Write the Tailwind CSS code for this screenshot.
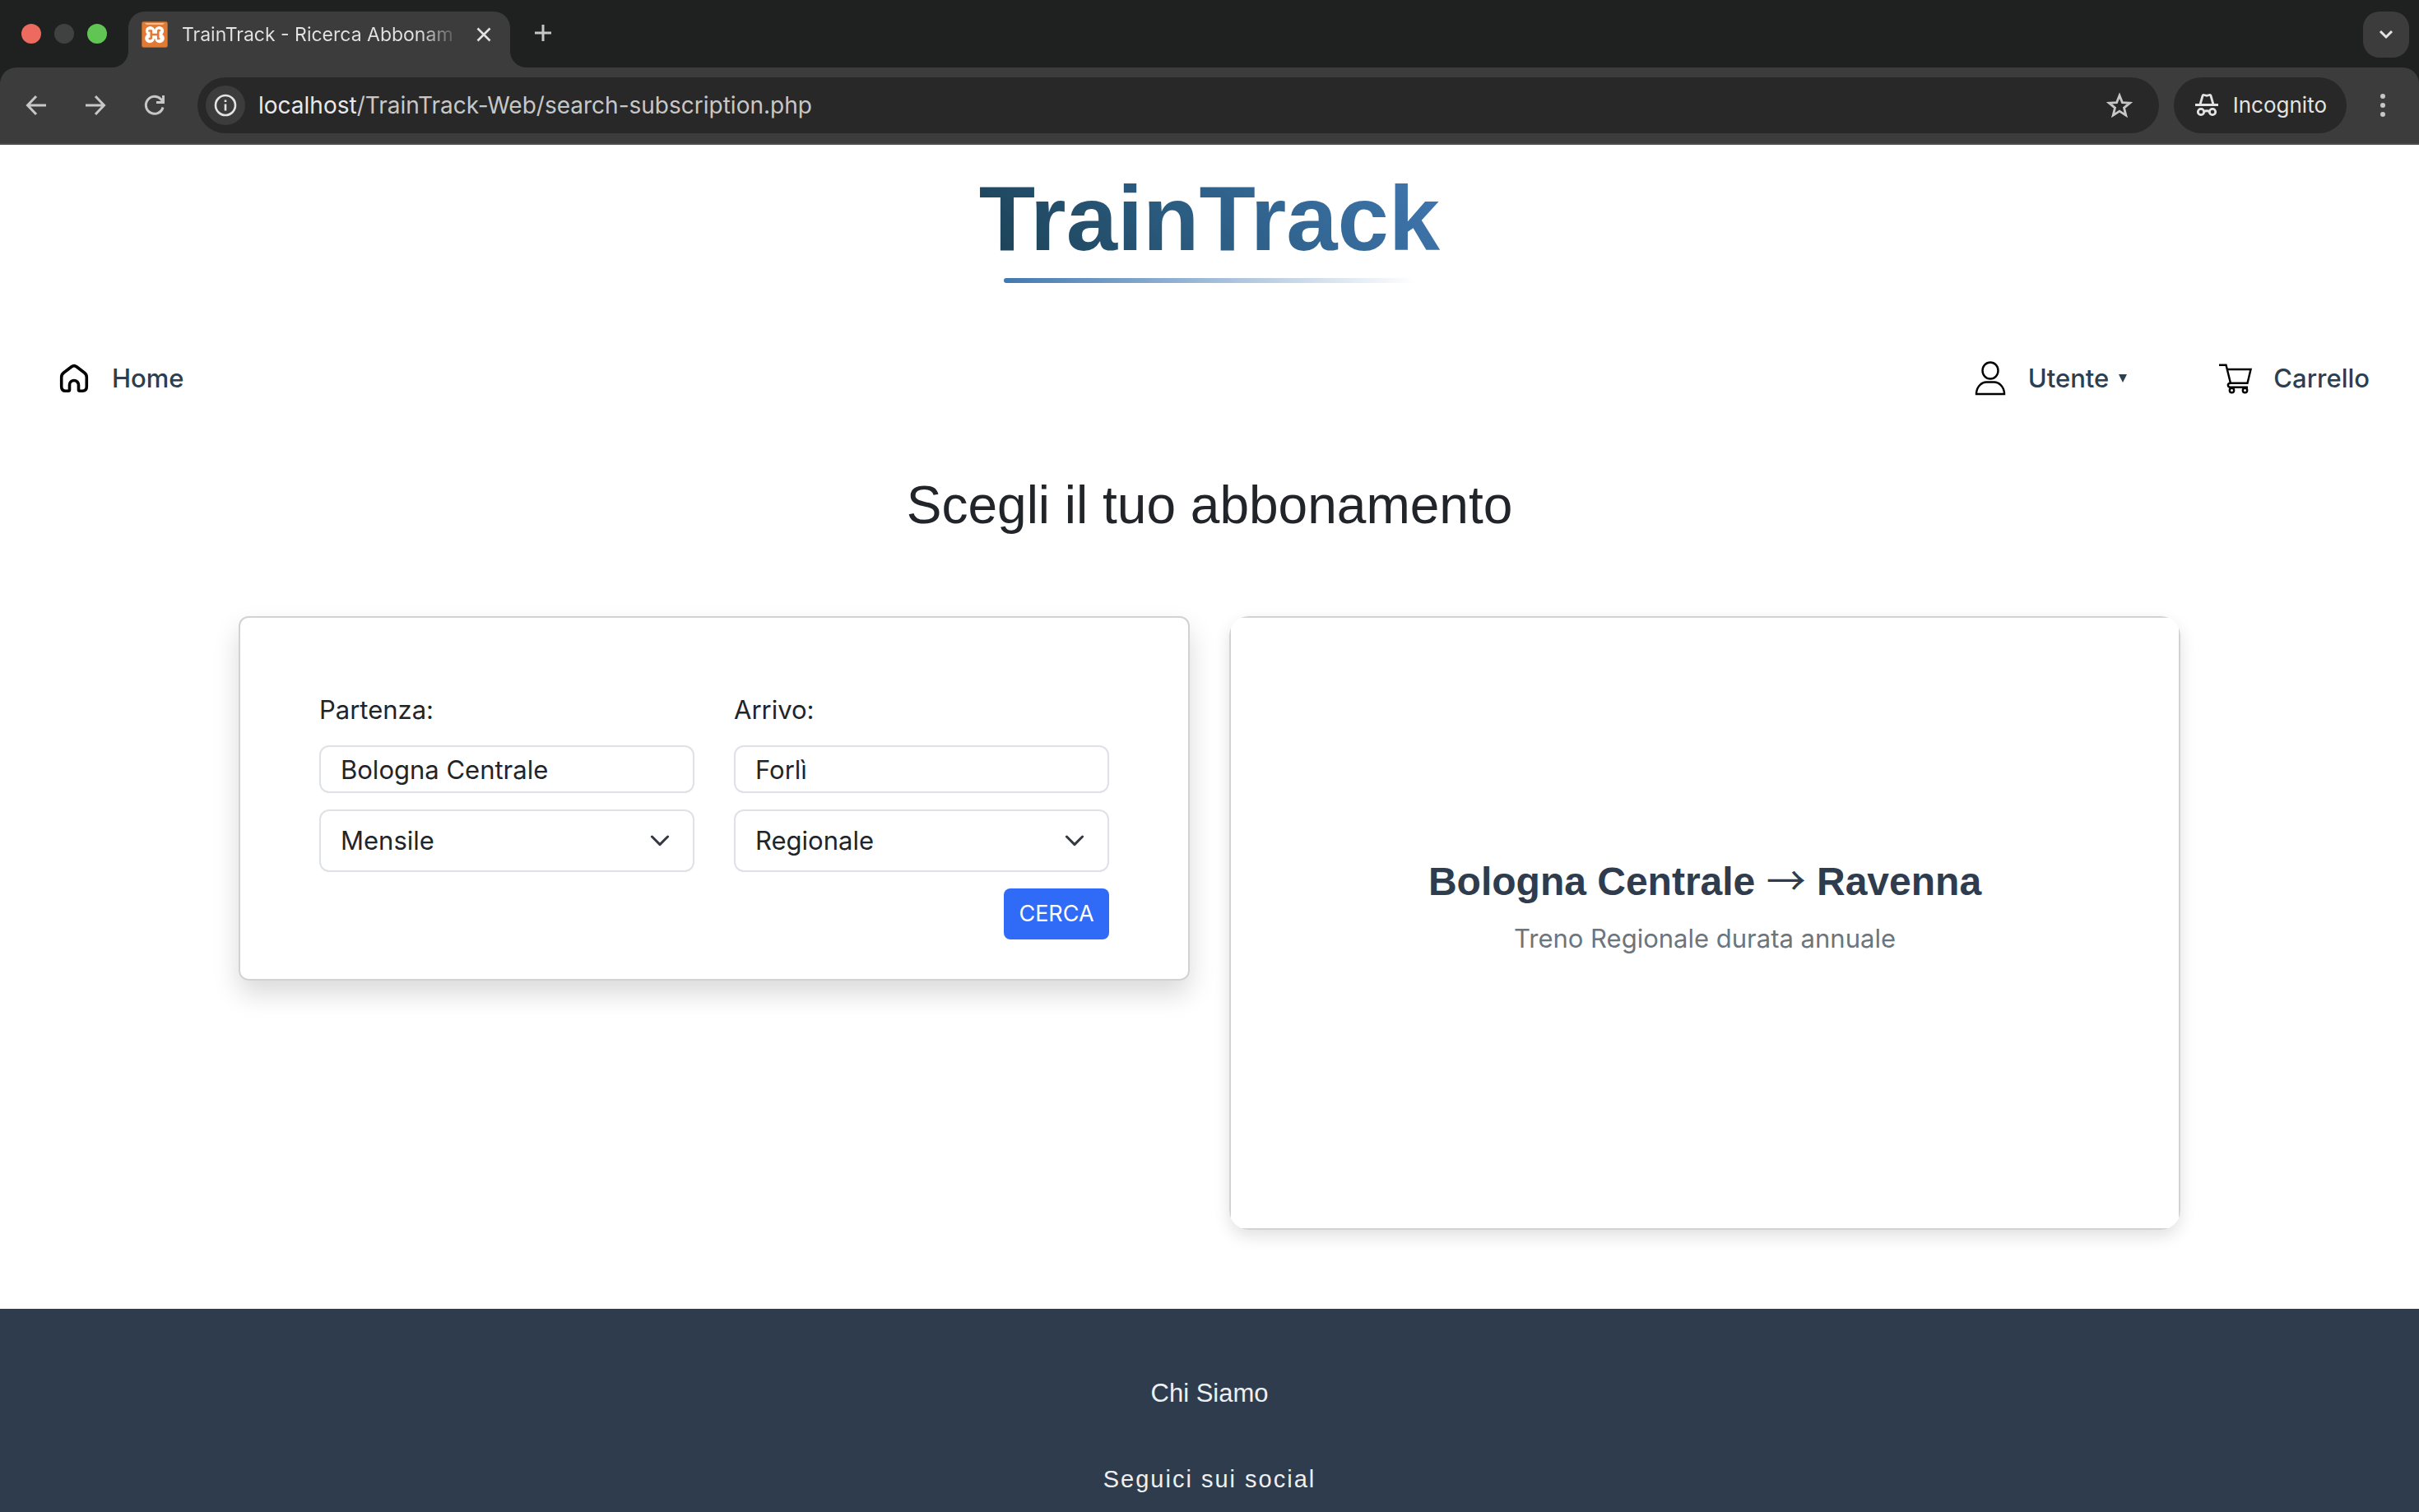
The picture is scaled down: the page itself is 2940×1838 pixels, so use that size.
<!DOCTYPE html>
<html lang="it">
<head>
<meta charset="utf-8">
<meta name="viewport" content="width=device-width, initial-scale=1">
<title>TrainTrack - Ricerca Abbonamento</title>
<script src="https://cdn.jsdelivr.net/npm/@tailwindcss/browser@4"></script>
</head>
<body class="bg-white text-[#212529] font-['Inter',sans-serif] h-screen overflow-hidden flex flex-col">

<!-- Browser window -->
<div class="shrink-0 bg-[#1f2120]">
  <div class="flex h-[82px] items-end">
    <div class="flex h-full w-[156px] shrink-0 items-center gap-4 pl-[26px]">
      <span class="size-6 rounded-full bg-[#ec6a5e]"></span>
      <span class="size-6 rounded-full bg-[#404241]"></span>
      <span class="size-6 rounded-full bg-[#61c554]"></span>
    </div>
    <div class="relative flex h-[68px] w-[464px] shrink-0 items-start rounded-t-[20px] bg-[#3c3c3c] pl-4 pt-3">
      <svg class="absolute -left-5 bottom-0 size-5" viewBox="0 0 20 20" fill="#3c3c3c"><path d="M20 0v20H0A20 20 0 0 0 20 0z"/></svg>
      <svg class="absolute -right-5 bottom-0 size-5" viewBox="0 0 20 20" fill="#3c3c3c"><path d="M0 0v20h20A20 20 0 0 1 0 0z"/></svg>
      <svg class="size-8 shrink-0" viewBox="0 0 32 32"><rect x=".5" y=".5" width="31" height="31" rx="2" fill="#e07a35" stroke="#a9632b"/><path d="M4 2h24l-2 2H6z" fill="#f6b98a"/><g fill="#fff"><circle cx="10.500" cy="11.500" r="5.600"/><circle cx="21.500" cy="11.500" r="5.600"/><circle cx="10" cy="20.500" r="5.800"/><circle cx="22" cy="20.500" r="5.800"/><path d="M10 11h12v10H10z"/></g><path d="M9.500 11.500h2.300v8.500q0 1-2 1M21.300 21h-1.100v-9.500q0-1 1.600-.5M12 16h8" fill="none" stroke="#e07a35" stroke-width="2.600" stroke-linecap="round"/></svg>
      <span class="ml-[17px] w-[340px] shrink-0 whitespace-nowrap bg-linear-to-r from-[#e3e3e3] from-85% to-transparent bg-clip-text text-[23px]/8 text-transparent">TrainTrack - Ricerca Abbonam</span>
      <button class="ml-[15px] mt-1 size-6" aria-label="Chiudi scheda"><svg class="size-6" viewBox="0 0 24 24" stroke="#e3e3e3" stroke-width="2.600"><path d="M4.500 4.500l15 15M19.500 4.500l-15 15"/></svg></button>
    </div>
    <button class="mb-[30px] ml-7 size-6" aria-label="Nuova scheda"><svg class="size-6" viewBox="0 0 24 24" stroke="#c7c7c7" stroke-width="3"><path d="M2 12h20M12 2v20"/></svg></button>
    <button class="mb-3 ml-auto mr-3 flex size-14 items-center justify-center rounded-[20px] bg-[#3c3c3c]" aria-label="Cerca schede"><svg class="size-6" viewBox="0 0 24 24" fill="none" stroke="#e3e3e3" stroke-width="3"><path d="M5 8l7 7 7-7"/></svg></button>
  </div>

  <div class="flex h-[94px] items-center rounded-t-[20px] border-b-2 border-[#4a4a4a] bg-[#3c3c3c] pl-7">
    <div class="flex gap-10">
      <button class="size-8" aria-label="Indietro"><svg class="size-8" viewBox="0 0 32 32" fill="none" stroke="#c7c7c7" stroke-width="3"><path d="M28 16H6M16 5L5.500 16 16 27"/></svg></button>
      <button class="size-8" aria-label="Avanti"><svg class="size-8" viewBox="0 0 32 32" fill="none" stroke="#c7c7c7" stroke-width="3"><path d="M4 16h22M16 5l10.500 11L16 27"/></svg></button>
      <button class="size-8" aria-label="Ricarica"><svg class="size-8" viewBox="0 0 32 32" fill="none" stroke="#c7c7c7" stroke-width="3"><path d="M26 18.500A10.500 10.500 0 1 1 23.500 8.500l2.500 3"/><path d="M26.500 4v8.500H18"/></svg></button>
    </div>
    <div class="ml-9 flex h-[68px] flex-1 items-center rounded-full bg-[#282828] pl-[10px] pr-8">
      <span class="flex size-12 items-center justify-center rounded-full bg-[#3c3c3c]"><svg class="size-7" viewBox="0 0 28 28" fill="none" stroke="#e3e3e3" stroke-width="2.600"><circle cx="14" cy="14" r="12"/><path d="M14 12.500v8M14 7.500v2.600"/></svg></span>
      <div class="ml-4 flex-1 text-[28px]/8 text-[#c7c7c7]"><span class="text-[#e9e9e9]">localhost</span>/TrainTrack-Web/search-subscription.php</div>
      <button class="size-8" aria-label="Preferiti"><svg class="size-8" viewBox="0 0 32 32" fill="none" stroke="#c7c7c7" stroke-width="2.800"><path d="M16 4l3.400 8.600 9.200.6-7.100 5.900 2.300 9L16 23.100l-7.800 5 2.300-9-7.100-5.900 9.200-.6z"/></svg></button>
    </div>
    <button class="ml-[18px] flex h-[68px] items-center gap-4 rounded-full bg-[#282828] pl-6 pr-6 text-[26px]/8 text-[#e3e3e3]">
      <svg class="size-8" viewBox="0 0 32 32" fill="none" stroke="#e3e3e3" stroke-width="2.800"><path d="M2 15.500h28M8 15l3-10.500c.3-1 1-1.300 2-1l3 .8 3-.8c1-.3 1.700 0 2 1L24 15"/><circle cx="9" cy="24" r="3.700"/><circle cx="23" cy="24" r="3.700"/><path d="M12.500 23.500q3.500-1.500 7 0"/></svg>
      Incognito
    </button>
    <button class="ml-7 mr-7 size-8" aria-label="Menu"><svg class="size-8" viewBox="0 0 32 32" fill="#c7c7c7"><circle cx="16" cy="5" r="3"/><circle cx="16" cy="16" r="3"/><circle cx="16" cy="27" r="3"/></svg></button>
  </div>
</div>

<!-- Page -->
<header class="shrink-0">
  <div class="flex flex-col items-center pt-[18px]">
    <h1 class="bg-linear-45 from-[#1a3e50] via-[#2d5f86] to-[#4279b4] bg-clip-text font-['Liberation_Sans',Arial,sans-serif] text-[112px]/[144px] font-bold text-transparent">TrainTrack</h1>
    <div class="h-[6px] w-[500px] rounded-full bg-linear-to-r from-[#4178b0] to-transparent"></div>
  </div>
  <nav class="mt-[84px] flex h-16 items-center pl-[70px] pr-[60px] text-[31px]/[48px] font-medium text-[#2c3e50]">
    <a href="#" class="flex items-center gap-[26px]">
      <svg class="size-10" viewBox="0 0 40 40" fill="none" stroke="#000" stroke-width="3.600" stroke-linejoin="round"><path d="M17 5.800Q20 3.500 23 5.800l9.500 7.200q2.800 2.200 2.800 5.500V30q0 5.200-5 5.200h-3.300q-1.500 0-1.500-1.500V28a5.500 5.500 0 0 0-11 0v5.700q0 1.500-1.500 1.500H9.700q-5 0-5-5.200V18.500q0-3.300 2.800-5.500z"/></svg>
      Home
    </a>
    <button class="ml-auto flex items-center">
      <svg class="mr-6 size-11" viewBox="0 0 44 44" fill="none" stroke="#000" stroke-width="2.400"><ellipse cx="22" cy="12.500" rx="9.500" ry="10"/><path d="M5 41v-1.500C6 31 12 26.500 17 26.500h10c5 0 11 4.500 12 13V41z"/></svg>
      Utente
      <svg class="ml-3 size-[10px]" viewBox="0 0 10 10" fill="#2c3e50"><path d="M0 0h10L5 10z"/></svg>
    </button>
    <a href="#" class="ml-28 flex items-center gap-[26px]">
      <svg class="size-10" viewBox="0 0 40 40" fill="none" stroke="#000" stroke-width="2.400"><path d="M0 3.700h8.500l5.500 22h20.500L38.500 9H10M14 25.700c-4.500 0-4 5 0 5h21"/><circle cx="15.500" cy="34.500" r="2.700"/><circle cx="31.500" cy="34.500" r="2.700"/></svg>
      Carrello
    </a>
  </nav>
</header>

<main class="shrink-0 pb-24">
  <h2 class="mt-[84px] text-center font-['Liberation_Sans',Arial,sans-serif] text-[64px]/[76px]">Scegli il tuo abbonamento</h2>
  <div class="mx-auto mt-[97px] grid w-full max-w-[2360px] grid-cols-2 items-start gap-12">
    <form class="rounded-xl border-2 border-[#d2d2d2] px-24 pb-12 pt-[88px] shadow-[0_16px_32px_rgba(0,0,0,0.15)]">
      <div class="grid grid-cols-2 gap-x-12 text-[31px]/[48px]">
        <div class="flex flex-col">
          <label for="from">Partenza:</label>
          <input id="from" value="Bologna Centrale" class="mt-[19px] h-[58px] w-full rounded-xl border-2 border-[#dee2e6] px-6">
        </div>
        <div class="flex flex-col">
          <label for="to">Arrivo:</label>
          <input id="to" value="Forlì" class="mt-[19px] h-[58px] w-full rounded-xl border-2 border-[#dee2e6] px-6">
        </div>
        <div class="relative mt-5">
          <select aria-label="Durata" class="h-[76px] w-full appearance-none rounded-xl border-2 border-[#dee2e6] px-6"><option>Mensile</option><option>Annuale</option></select>
          <svg class="pointer-events-none absolute right-[26px] top-[22px] size-8" viewBox="0 0 16 16" fill="none" stroke="#343a40" stroke-width="1.500" stroke-linecap="round" stroke-linejoin="round"><path d="M3.200 5.500L8 10.300l4.800-4.800"/></svg>
        </div>
        <div class="relative mt-5">
          <select aria-label="Tipo di treno" class="h-[76px] w-full appearance-none rounded-xl border-2 border-[#dee2e6] px-6"><option>Regionale</option></select>
          <svg class="pointer-events-none absolute right-[26px] top-[22px] size-8" viewBox="0 0 16 16" fill="none" stroke="#343a40" stroke-width="1.500" stroke-linecap="round" stroke-linejoin="round"><path d="M3.200 5.500L8 10.300l4.800-4.800"/></svg>
        </div>
      </div>
      <div class="mt-5 flex justify-end"><button type="button" class="h-[62px] w-32 rounded-lg bg-[#2f6bf6] text-[27px]/8 text-white">CERCA</button></div>
    </form>
    <section class="overflow-hidden rounded-3xl shadow-[0_8px_20px_rgba(0,0,0,0.12)]">
      <div class="flex h-[746px] flex-col items-center justify-center rounded-xl border-2 border-[#d2d2d2] pb-9 text-center">
        <h3 class="font-['Liberation_Sans',Arial,sans-serif] text-5xl/[58px] font-bold text-[#2f3c4e]">Bologna Centrale <span class="font-['Noto_Sans_CJK_JP',sans-serif] leading-none font-normal">→</span> Ravenna</h3>
        <p class="mt-4 text-[31px]/[48px] text-[#6c757d]">Treno Regionale durata annuale</p>
      </div>
    </section>
  </div>
</main>

<footer class="flex flex-1 flex-col items-center bg-[#2f3c4e] pt-[79px] font-['Liberation_Sans',Arial,sans-serif] text-[#ecf0f1]">
  <a href="#" class="text-[31px]/[48px]">Chi Siamo</a>
  <p class="mt-[58px] text-[29px]/[44px] tracking-[2px]">Seguici sui social</p>
</footer>
</body>
</html>
